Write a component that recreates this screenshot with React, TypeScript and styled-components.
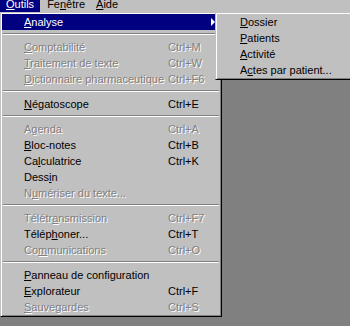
import React from 'react';
import styled, { createGlobalStyle, css } from 'styled-components';

const GlobalStyle = createGlobalStyle`
  html, body {
    margin: 0;
    padding: 0;
    background: #808080;
  }
`;

type Entry =
  | { kind: 'sep' }
  | {
      kind: 'item';
      label: string;
      key: number;
      shortcut?: string;
      disabled?: boolean;
      active?: boolean;
      sub?: boolean;
    };

const mainItems: Entry[] = [
  { kind: 'item', label: 'Analyse', key: 0, active: true, sub: true },
  { kind: 'sep' },
  { kind: 'item', label: 'Comptabilité', key: 0, shortcut: 'Ctrl+M', disabled: true },
  { kind: 'item', label: 'Traitement de texte', key: 0, shortcut: 'Ctrl+W', disabled: true },
  { kind: 'item', label: 'Dictionnaire pharmaceutique', key: 0, shortcut: 'Ctrl+F6', disabled: true },
  { kind: 'sep' },
  { kind: 'item', label: 'Négatoscope', key: 0, shortcut: 'Ctrl+E' },
  { kind: 'sep' },
  { kind: 'item', label: 'Agenda', key: 1, shortcut: 'Ctrl+A', disabled: true },
  { kind: 'item', label: 'Bloc-notes', key: 0, shortcut: 'Ctrl+B' },
  { kind: 'item', label: 'Calculatrice', key: 2, shortcut: 'Ctrl+K' },
  { kind: 'item', label: 'Dessin', key: 4 },
  { kind: 'item', label: 'Numériser du texte...', key: 1, disabled: true },
  { kind: 'sep' },
  { kind: 'item', label: 'Télétransmission', key: 6, shortcut: 'Ctrl+F7', disabled: true },
  { kind: 'item', label: 'Téléphoner...', key: 5, shortcut: 'Ctrl+T' },
  { kind: 'item', label: 'Communications', key: 2, shortcut: 'Ctrl+O', disabled: true },
  { kind: 'sep' },
  { kind: 'item', label: 'Panneau de configuration', key: 0 },
  { kind: 'item', label: 'Explorateur', key: 0, shortcut: 'Ctrl+F' },
  { kind: 'item', label: 'Sauvegardes', key: 0, shortcut: 'Ctrl+S', disabled: true },
];

const subItems = [
  { label: 'Dossier', key: 0 },
  { label: 'Patients', key: 0 },
  { label: 'Activité', key: 0 },
  { label: 'Actes par patient...', key: 1 },
];

const Screen = styled.div`
  width: 350px;
  height: 326px;
  background: #808080;
  display: flex;
  flex-direction: column;
  overflow: hidden;
  font-family: 'Liberation Sans', Arial, sans-serif;
  font-size: 11px;
  color: #000;
`;

const MenuBar = styled.div`
  height: 12px;
  flex: none;
  background: #c0c0c0;
  display: flex;
  gap: 3px;
  overflow: hidden;
`;

const BarItem = styled.div<{ $open?: boolean }>`
  margin-top: -4px;
  height: 16px;
  line-height: 16px;
  padding: 0 4px;
  ${p =>
    p.$open &&
    css`
      padding: 0 6px;
      background: #000080;
      color: #fff;
    `}
`;

const Desktop = styled.div`
  flex: 1;
  position: relative;
`;

const Panel = styled.div<{ $left: number; $width: number }>`
  position: absolute;
  top: 0;
  left: ${p => p.$left}px;
  width: ${p => p.$width}px;
  box-sizing: border-box;
  background: #c0c0c0;
  padding: 1px;
  border-style: solid;
  border-width: 1px;
  border-color: #c0c0c0 #000 #000 #c0c0c0;
  box-shadow: inset 1px 1px 0 #fff, inset -1px -1px 0 #808080;
`;

const Row = styled.div<{ $active?: boolean; $disabled?: boolean; $indent?: number }>`
  height: 16px;
  line-height: 16px;
  display: flex;
  align-items: center;
  padding-left: ${p => p.$indent ?? 22}px;
  white-space: nowrap;
  position: relative;
  ${p =>
    p.$active &&
    css`
      background: #000080;
      color: #fff;
    `}
  ${p =>
    p.$disabled &&
    css`
      color: #808080;
      text-shadow: 1px 1px 0 #fff;
    `}
`;

const Label = styled.span`
  width: 144px;
  flex: none;
`;

const Shortcut = styled.span`
  flex: 1;
`;

const Arrow = styled.span`
  position: absolute;
  right: 5px;
  top: 4px;
  width: 0;
  height: 0;
  border-top: 4px solid transparent;
  border-bottom: 4px solid transparent;
  border-left: 4px solid currentColor;
`;

const Separator = styled.div`
  height: 9px;
  box-sizing: border-box;
  padding-top: 3px;

  &::after {
    content: '';
    display: block;
    margin: 0 1px;
    border-top: 1px solid #808080;
    border-bottom: 1px solid #fff;
  }
`;

const U = styled.span`
  text-decoration: underline;
  text-underline-offset: 1px;
`;

function Mnemonic({ text, at }: { text: string; at: number }) {
  return (
    <>
      {text.slice(0, at)}
      <U>{text[at]}</U>
      {text.slice(at + 1)}
    </>
  );
}

export default function App() {
  return (
    <Screen>
      <GlobalStyle />
      <MenuBar>
        <BarItem $open>
          <Mnemonic text="Outils" at={0} />
        </BarItem>
        <BarItem>
          <Mnemonic text="Fenêtre" at={2} />
        </BarItem>
        <BarItem>
          <Mnemonic text="Aide" at={0} />
        </BarItem>
      </MenuBar>
      <Desktop>
        <Panel $left={0} $width={222}>
          {mainItems.map((e, i) =>
            e.kind === 'sep' ? (
              <Separator key={i} />
            ) : (
              <Row key={i} $active={e.active} $disabled={e.disabled}>
                <Label>
                  <Mnemonic text={e.label} at={e.key} />
                </Label>
                {e.shortcut && <Shortcut>{e.shortcut}</Shortcut>}
                {e.sub && <Arrow />}
              </Row>
            )
          )}
        </Panel>
        <Panel $left={215} $width={150}>
          {subItems.map(s => (
            <Row key={s.label} $indent={23}>
              <Mnemonic text={s.label} at={s.key} />
            </Row>
          ))}
        </Panel>
      </Desktop>
    </Screen>
  );
}
